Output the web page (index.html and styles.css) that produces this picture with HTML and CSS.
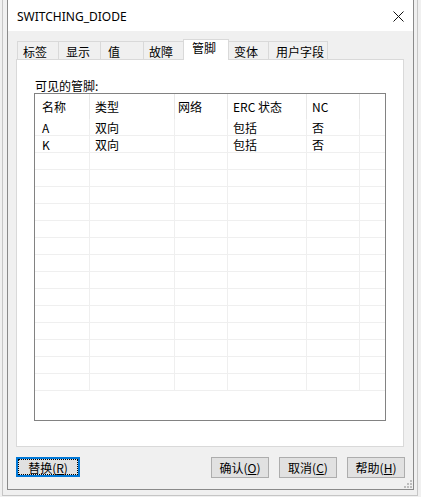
FILE: index.html
```html
<!DOCTYPE html>
<html lang="zh-CN">
<head>
<meta charset="utf-8">
<title>SWITCHING_DIODE</title>
<link rel="stylesheet" href="styles.css">
</head>
<body>
<div class="desk">
  <div class="window">
    <div class="titlebar">
      <span class="title">SWITCHING_DIODE</span>
      <svg class="close" width="11" height="11" viewBox="0 0 11 11"><path d="M0.5 0.5 L10.5 10.5 M10.5 0.5 L0.5 10.5" stroke="#111" stroke-width="1" fill="none"/></svg>
    </div>
    <div class="body">
      <div class="tabs">
        <div class="tab t1">标签</div>
        <div class="tab t2">显示</div>
        <div class="tab t3">值</div>
        <div class="tab t4">故障</div>
        <div class="tab t5 active">管脚</div>
        <div class="tab t6">变体</div>
        <div class="tab t7">用户字段</div>
      </div>
      <div class="panel">
        <div class="label">可见的管脚:</div>
        <div class="list">
          <div class="row head">
            <div class="c c1">名称</div><div class="c c2">类型</div><div class="c c3">网络</div><div class="c c4">ERC 状态</div><div class="c c5">NC</div><div class="c c6"></div>
          </div>
          <div class="row">
            <div class="c c1">A</div><div class="c c2">双向</div><div class="c c3"></div><div class="c c4">包括</div><div class="c c5">否</div><div class="c c6"></div>
          </div>
          <div class="row">
            <div class="c c1">K</div><div class="c c2">双向</div><div class="c c3"></div><div class="c c4">包括</div><div class="c c5">否</div><div class="c c6"></div>
          </div>
          <div class="row"><div class="c c1"></div><div class="c c2"></div><div class="c c3"></div><div class="c c4"></div><div class="c c5"></div><div class="c c6"></div></div>
          <div class="row"><div class="c c1"></div><div class="c c2"></div><div class="c c3"></div><div class="c c4"></div><div class="c c5"></div><div class="c c6"></div></div>
          <div class="row"><div class="c c1"></div><div class="c c2"></div><div class="c c3"></div><div class="c c4"></div><div class="c c5"></div><div class="c c6"></div></div>
          <div class="row"><div class="c c1"></div><div class="c c2"></div><div class="c c3"></div><div class="c c4"></div><div class="c c5"></div><div class="c c6"></div></div>
          <div class="row"><div class="c c1"></div><div class="c c2"></div><div class="c c3"></div><div class="c c4"></div><div class="c c5"></div><div class="c c6"></div></div>
          <div class="row"><div class="c c1"></div><div class="c c2"></div><div class="c c3"></div><div class="c c4"></div><div class="c c5"></div><div class="c c6"></div></div>
          <div class="row"><div class="c c1"></div><div class="c c2"></div><div class="c c3"></div><div class="c c4"></div><div class="c c5"></div><div class="c c6"></div></div>
          <div class="row"><div class="c c1"></div><div class="c c2"></div><div class="c c3"></div><div class="c c4"></div><div class="c c5"></div><div class="c c6"></div></div>
          <div class="row"><div class="c c1"></div><div class="c c2"></div><div class="c c3"></div><div class="c c4"></div><div class="c c5"></div><div class="c c6"></div></div>
          <div class="row"><div class="c c1"></div><div class="c c2"></div><div class="c c3"></div><div class="c c4"></div><div class="c c5"></div><div class="c c6"></div></div>
          <div class="row"><div class="c c1"></div><div class="c c2"></div><div class="c c3"></div><div class="c c4"></div><div class="c c5"></div><div class="c c6"></div></div>
          <div class="row"><div class="c c1"></div><div class="c c2"></div><div class="c c3"></div><div class="c c4"></div><div class="c c5"></div><div class="c c6"></div></div>
          <div class="row"><div class="c c1"></div><div class="c c2"></div><div class="c c3"></div><div class="c c4"></div><div class="c c5"></div><div class="c c6"></div></div>
          <div class="row"><div class="c c1"></div><div class="c c2"></div><div class="c c3"></div><div class="c c4"></div><div class="c c5"></div><div class="c c6"></div></div>
        </div>
      </div>
      <div class="buttons">
        <button class="btn replace"><span>替换(<u>R</u>)</span></button>
        <div class="spacer"></div>
        <button class="btn">确认(<u>O</u>)</button>
        <button class="btn">取消(<u>C</u>)</button>
        <button class="btn">帮助(<u>H</u>)</button>
      </div>
    </div>
    <svg class="grip" width="8" height="8" viewBox="0 0 8 8">
      <rect x="6" y="0" width="2" height="2" fill="#bdbdbd"/>
      <rect x="3" y="3" width="2" height="2" fill="#bdbdbd"/>
      <rect x="6" y="3" width="2" height="2" fill="#bdbdbd"/>
      <rect x="0" y="6" width="2" height="2" fill="#bdbdbd"/>
      <rect x="3" y="6" width="2" height="2" fill="#bdbdbd"/>
      <rect x="6" y="6" width="2" height="2" fill="#bdbdbd"/>
    </svg>
  </div>
</div>
</body>
</html>
```

FILE: styles.css
```css
* { box-sizing: border-box; }

html, body {
  margin: 0;
  padding: 0;
  background: #f0f0f0;
}

body {
  font-family: "Noto Sans CJK SC", "Noto Sans", sans-serif;
  font-size: 12px;
  color: #000;
  overflow: hidden;
}

.desk {
  margin-left: 2px;
  width: 416px;
  border-left: 1px solid #c6c6c6;
  border-right: 1px solid #c6c6c6;
  border-bottom: 1px solid #c6c6c6;
  padding: 0 3px 5px 4px;
  background: #f0f0f0;
}

.window {
  position: relative;
  width: 407px;
  height: 490px;
  border-left: 1px solid #8a8a8a;
  border-right: 1px solid #8a8a8a;
  border-bottom: 1px solid #8a8a8a;
  background: #f0f0f0;
  display: flex;
  flex-direction: column;
}

.titlebar {
  height: 31px;
  background: #fff;
  display: flex;
  align-items: center;
  justify-content: space-between;
  padding: 0 9px 0 9px;
  flex: none;
}

.title {
  font-family: "Noto Sans", "Open Sans", sans-serif;
  font-size: 12px;
  color: #000;
  padding-top: 1px;
}

.close {
  display: block;
  margin-top: 1px;
}

.body {
  padding: 8px 9px 0 8px;
  flex: 1;
  display: flex;
  flex-direction: column;
}

.tabs {
  height: 20px;
  display: flex;
  align-items: flex-end;
  padding-left: 1px;
}

.tab {
  height: 18px;
  border: 1px solid #d9d9d9;
  border-bottom: 0;
  margin-right: -1px;
  padding-left: 5px;
  padding-top: 2px;
  line-height: 15px;
  background: #f0f0f0;
  white-space: nowrap;
}

.t1 { width: 42px; }
.t2 { width: 43px; padding-left: 7px; }
.t3 { width: 44px; padding-left: 7px; }
.t4 { width: 41px; }
.t5 { width: 46px; padding-left: 8px; }
.t6 { width: 41px; }
.t7 { width: 60px; padding-left: 7px; }

.tab.active {
  height: 21px;
  margin-bottom: -1px;
  background: #fff;
  position: relative;
  z-index: 1;
  padding-top: 0;
  line-height: 15px;
}

.panel {
  width: 388px;
  height: 388px;
  border: 1px solid #d9d9d9;
  background: #fff;
  padding: 19px 0 0 17px;
}

.label {
  height: 14px;
  line-height: 14px;
  padding-left: 1px;
}

.list {
  width: 352px;
  height: 328px;
  border: 1px solid #828282;
  background: #fff;
  overflow: hidden;
}

.row {
  display: grid;
  grid-template-columns: 55px 85px 53px 79px 53px 1fr;
  height: 17px;
  border-bottom: 1px solid #efefef;
}

.row.head {
  height: 25px;
  border-bottom: 0;
}

.c {
  border-right: 1px solid #efefef;
  padding-left: 5px;
  line-height: 17px;
  white-space: nowrap;
  overflow: hidden;
}

.row.head .c {
  line-height: 26px;
  border-right-color: #e8e8e8;
}

.c1 { padding-left: 7px; }
.c3 { padding-left: 3px; }
.c6 { border-right: 0; }

.buttons {
  margin-top: 10px;
  display: flex;
  gap: 10px;
  margin-right: -1px;
}

.spacer { flex: 1; }

.btn {
  width: 58px;
  height: 21px;
  padding: 0;
  margin: 0;
  border: 1px solid #adadad;
  background: #e1e1e1;
  font-family: "Noto Sans CJK SC", "Noto Sans", sans-serif;
  font-size: 12px;
  color: #000;
  line-height: 17px;
  text-align: center;
}

.btn u {
  text-decoration: underline;
  text-underline-offset: 1px;
}

.btn.replace {
  width: 64px;
  height: 20px;
  border: 2px solid #0078d7;
  outline: 1px dotted #000;
  outline-offset: -3px;
  line-height: 15px;
}

.grip {
  position: absolute;
  right: 1px;
  bottom: 1px;
  display: block;
}
```
